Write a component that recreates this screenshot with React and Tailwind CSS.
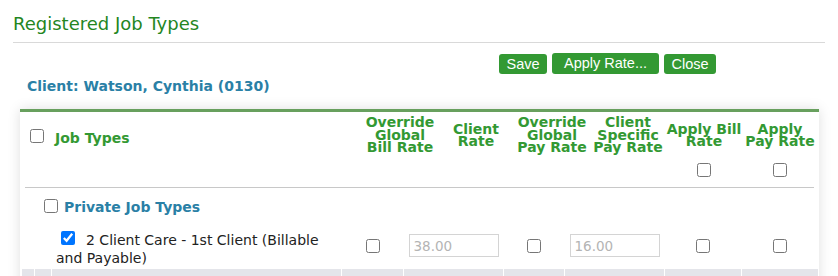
const headCols = [
  ["Override", "Global", "Bill Rate"],
  ["Client", "Rate"],
  ["Override", "Global", "Pay Rate"],
  ["Client", "Specific", "Pay Rate"],
  ["Apply Bill", "Rate"],
  ["Apply", "Pay Rate"],
];

const Box = ({ checked = false, className = "" }) => (
  <input
    type="checkbox"
    defaultChecked={checked}
    className={"w-[14px] h-[14px] m-0 align-middle " + className}
  />
);

const RateInput = ({ value }) => (
  <input
    type="text"
    readOnly
    value={value}
    className="w-[90px] h-[23px] border border-[#d4d4d4] px-[4px] text-[13.5px] text-[#b4b4b4] bg-white outline-none"
  />
);

export default function App() {
  return (
    <div className="w-[838px] h-[276px] overflow-hidden bg-white font-['DejaVu_Sans',Verdana,sans-serif]">
      <div className="px-[13px] pt-[13px]">
        <h2 className="text-[18px] leading-[22px] text-[#24861f] pb-[7px] border-b border-[#d9d9d9]">
          Registered Job Types
        </h2>
      </div>

      <div className="flex items-end gap-[5px] pl-[499px] mt-[10px] font-['Liberation_Sans',Arial,sans-serif] text-[14.5px] text-white">
        <button className="w-[48px] h-[20px] rounded-[3px] bg-[#339933] leading-[20px]">Save</button>
        <button className="w-[107px] h-[21px] rounded-[3px] bg-[#339933] leading-[21px]">Apply Rate...</button>
        <button className="w-[52px] h-[20px] rounded-[3px] bg-[#339933] leading-[20px]">Close</button>
      </div>

      <div className="pl-[27px] mt-[3px] text-[14px] leading-[18px] font-bold text-[#2a80a6]">
        Client: Watson, Cynthia (0130)
      </div>

      <div className="ml-[20px] w-[799px] mt-[14px] border-t-[3px] border-[#68a05e] bg-white shadow-[0_0_12px_rgba(0,0,0,0.13)]">
        {/* header */}
        <div className="flex">
          <div className="w-[342px] h-[46px] flex items-center pl-[10px] pt-[1px]">
            <Box />
            <span className="ml-[11px] text-[14px] font-bold text-[#339933] leading-[18px] mt-[5px]">Job Types</span>
          </div>
          {headCols.map((lines, i) => (
            <div key={i} className="w-[76px] h-[46px] flex flex-col items-center justify-center text-[14px] font-bold leading-[12.5px] text-[#339933] whitespace-nowrap">
              {lines.map((l) => (
                <span key={l}>{l}</span>
              ))}
            </div>
          ))}
        </div>
        <div className="flex h-[29px]">
          <div className="w-[646px]" />
          <div className="w-[76px] flex justify-center pt-[5px]">
            <Box />
          </div>
          <div className="w-[76px] flex justify-center pt-[5px]">
            <Box />
          </div>
        </div>
        <div className="mx-[5px] border-t border-[#c8c8c8]" />

        {/* group row */}
        <div className="h-[34px] flex items-center pl-[24px]">
          <Box className="mt-[1px]" />
          <span className="ml-[6px] text-[14px] font-bold leading-[18px] text-[#2a80a6] mt-[4px]">Private Job Types</span>
        </div>

        {/* data row */}
        <div className="grid grid-cols-[12px_16px_289px_61px_99px_60px_99px_76px_76px] gap-x-[1px] pl-[2px] items-center">
          <div />
          <div />
          <div className="pl-[4px] pt-[9px] pb-[2px] text-[14px] leading-[18px] text-[#222]">
            <input type="checkbox" defaultChecked className="w-[14px] h-[14px] ml-[5px] mr-[11px] my-0 align-baseline" />
            2 Client Care - 1st Client (Billable and Payable)
          </div>
          <div className="flex justify-center"><Box /></div>
          <div className="flex justify-center"><RateInput value="38.00" /></div>
          <div className="flex justify-center"><Box /></div>
          <div className="flex justify-center"><RateInput value="16.00" /></div>
          <div className="flex justify-center"><Box /></div>
          <div className="flex justify-center"><Box /></div>
        </div>

        {/* next row (cut off) */}
        <div className="grid grid-cols-[12px_16px_289px_61px_99px_60px_99px_76px_76px] gap-x-[1px] pl-[2px] h-[20px]">
          {Array.from({ length: 9 }).map((_, i) => (
            <div key={i} className="bg-[#e4e5ea]" />
          ))}
        </div>
      </div>
    </div>
  );
}
